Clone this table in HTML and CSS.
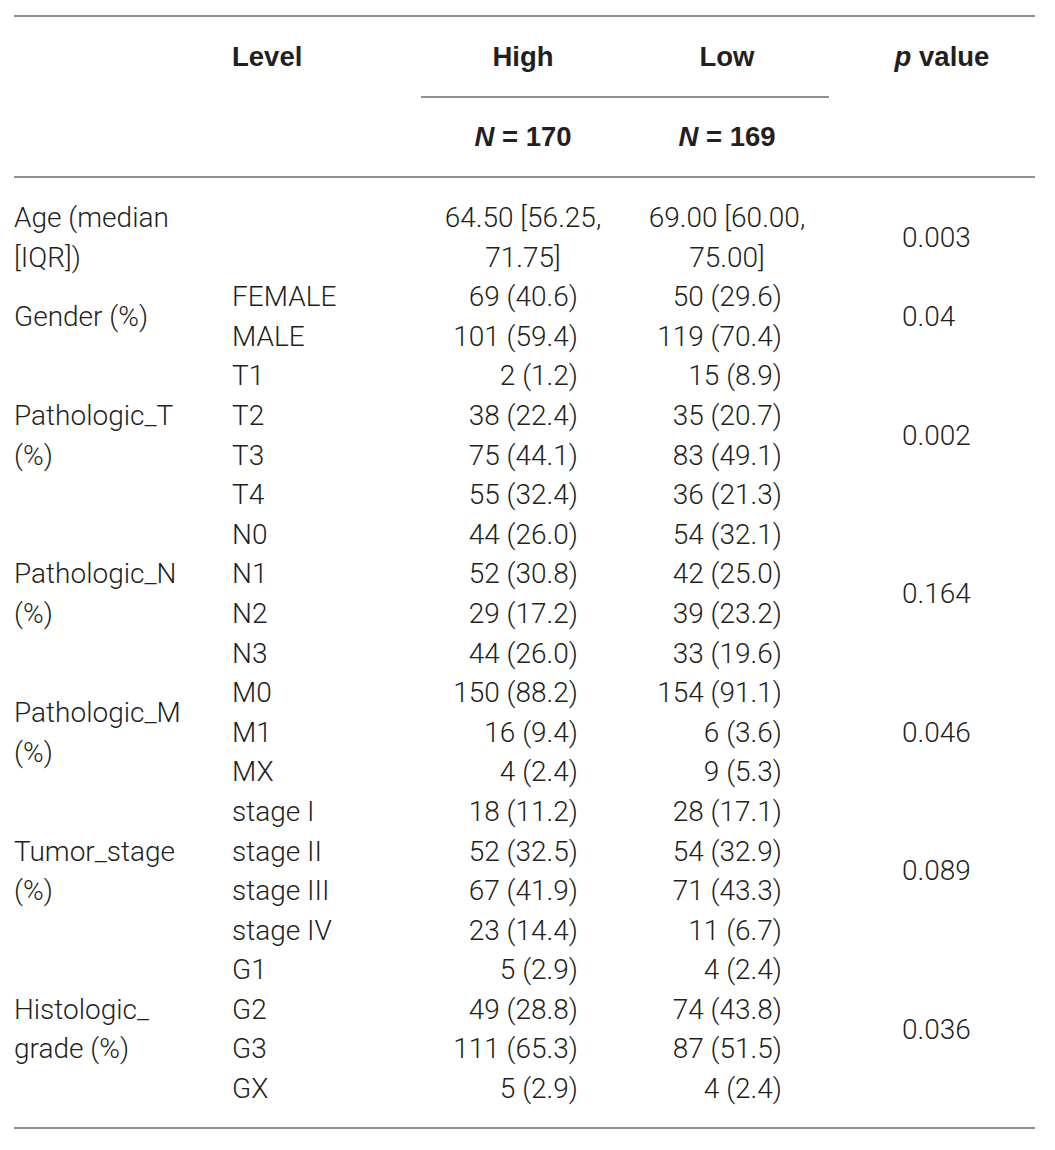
FILE: index.html
```html
<!DOCTYPE html>
<html lang="en">
<head>
    <meta charset="UTF-8">
    <title>Clinical characteristics</title>
    <link rel="stylesheet" href="styles.css">
</head>
<body>
<table class="tb">
    <colgroup>
        <col class="c-var">
        <col class="c-level">
        <col class="c-num">
        <col class="c-num">
        <col class="c-p">
    </colgroup>
    <thead>
        <tr class="head-top">
            <th></th>
            <th class="lv">Level</th>
            <th class="grp">High</th>
            <th class="grp">Low</th>
            <th class="pv"><i>p</i> value</th>
        </tr>
        <tr class="head-n">
            <th></th>
            <th></th>
            <th><i>N</i> = 170</th>
            <th><i>N</i> = 169</th>
            <th></th>
        </tr>
    </thead>
    <tbody>
        <tr class="gap"><td colspan="5"></td></tr>
        <tr>
            <td>Age (median<br>[IQR])</td>
            <td></td>
            <td class="mid">64.50 [56.25,<br>71.75]</td>
            <td class="mid">69.00 [60.00,<br>75.00]</td>
            <td class="p">0.003</td>
        </tr>
        <tr>
            <td rowspan="2">Gender (%)</td>
            <td>FEMALE</td>
            <td class="n">69 (40.6)</td>
            <td class="n">50 (29.6)</td>
            <td rowspan="2" class="p">0.04</td>
        </tr>
        <tr><td>MALE</td><td class="n">101 (59.4)</td><td class="n">119 (70.4)</td></tr>
        <tr>
            <td rowspan="4">Pathologic_T<br>(%)</td>
            <td>T1</td>
            <td class="n">2 (1.2)</td>
            <td class="n">15 (8.9)</td>
            <td rowspan="4" class="p">0.002</td>
        </tr>
        <tr><td>T2</td><td class="n">38 (22.4)</td><td class="n">35 (20.7)</td></tr>
        <tr><td>T3</td><td class="n">75 (44.1)</td><td class="n">83 (49.1)</td></tr>
        <tr><td>T4</td><td class="n">55 (32.4)</td><td class="n">36 (21.3)</td></tr>
        <tr>
            <td rowspan="4">Pathologic_N<br>(%)</td>
            <td>N0</td>
            <td class="n">44 (26.0)</td>
            <td class="n">54 (32.1)</td>
            <td rowspan="4" class="p">0.164</td>
        </tr>
        <tr><td>N1</td><td class="n">52 (30.8)</td><td class="n">42 (25.0)</td></tr>
        <tr><td>N2</td><td class="n">29 (17.2)</td><td class="n">39 (23.2)</td></tr>
        <tr><td>N3</td><td class="n">44 (26.0)</td><td class="n">33 (19.6)</td></tr>
        <tr>
            <td rowspan="3">Pathologic_M<br>(%)</td>
            <td>M0</td>
            <td class="n">150 (88.2)</td>
            <td class="n">154 (91.1)</td>
            <td rowspan="3" class="p">0.046</td>
        </tr>
        <tr><td>M1</td><td class="n">16 (9.4)</td><td class="n">6 (3.6)</td></tr>
        <tr><td>MX</td><td class="n">4 (2.4)</td><td class="n">9 (5.3)</td></tr>
        <tr>
            <td rowspan="4">Tumor_stage<br>(%)</td>
            <td>stage I</td>
            <td class="n">18 (11.2)</td>
            <td class="n">28 (17.1)</td>
            <td rowspan="4" class="p">0.089</td>
        </tr>
        <tr><td>stage II</td><td class="n">52 (32.5)</td><td class="n">54 (32.9)</td></tr>
        <tr><td>stage III</td><td class="n">67 (41.9)</td><td class="n">71 (43.3)</td></tr>
        <tr><td>stage IV</td><td class="n">23 (14.4)</td><td class="n">11 (6.7)</td></tr>
        <tr>
            <td rowspan="4">Histologic_<br>grade (%)</td>
            <td>G1</td>
            <td class="n">5 (2.9)</td>
            <td class="n">4 (2.4)</td>
            <td rowspan="4" class="p">0.036</td>
        </tr>
        <tr><td>G2</td><td class="n">49 (28.8)</td><td class="n">74 (43.8)</td></tr>
        <tr><td>G3</td><td class="n">111 (65.3)</td><td class="n">87 (51.5)</td></tr>
        <tr><td>GX</td><td class="n">5 (2.9)</td><td class="n">4 (2.4)</td></tr>
        <tr class="gap gap-end"><td colspan="5"></td></tr>
    </tbody>
</table>
</body>
</html>
```

FILE: styles.css
```css
*{margin: 0; padding: 0;}
body{
    background: #fff;
    color: #231f20;
    font-family: "Liberation Sans", Arial, sans-serif;
    font-size: 27.5px;
}
.tb{
    margin: 15px 0 0 14px;
    width: 1021px;
    table-layout: fixed;
    border-collapse: collapse;
    border-top: 2px solid #8f8f8f;
    border-bottom: 2px solid #8f8f8f;
}
.c-var{width: 218px;}
.c-level{width: 189px;}
.c-num{width: 204px;}
.c-p{width: 206px;}

th{
    padding: 0;
    font-weight: bold;
    text-align: center;
    vertical-align: middle;
}
.head-top th{height: 79px;}
.head-n th{
    height: 78px;
    border-bottom: 2px solid #8f8f8f;
}
th i{font-style: italic;}
th.lv{text-align: left;}
th.grp{border-bottom: 2px solid #8f8f8f;}
th.pv{padding-left: 20px;}

td{
    padding: 0;
    font-family: Roboto, "Liberation Sans", sans-serif;
    font-size: 28px;
    font-weight: 300;
    line-height: 39.6px;
    text-align: left;
    vertical-align: middle;
}
td.n{
    text-align: right;
    padding-right: 47px;
}
td.mid{text-align: center;}
td.p{padding-left: 73px;}
.gap td{height: 20px; line-height: 0;}
.gap-end td{height: 18px;}
```
